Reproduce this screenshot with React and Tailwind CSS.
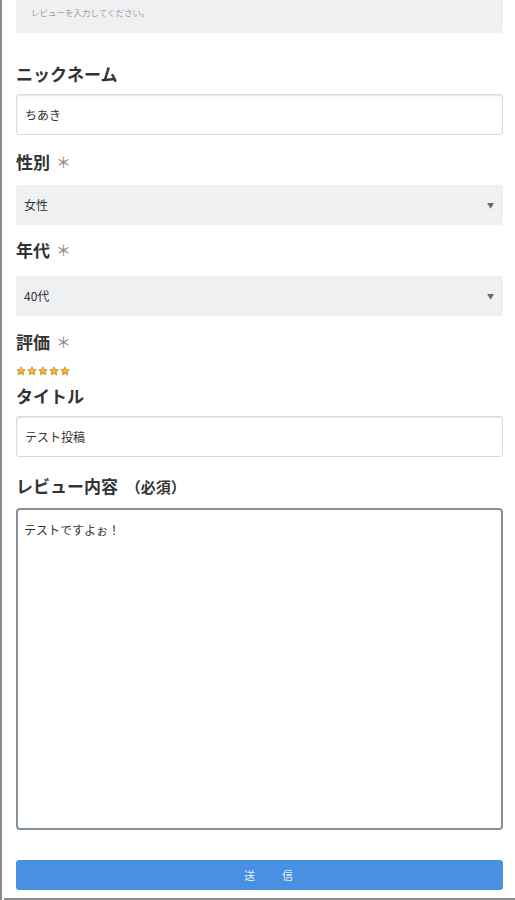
import React from 'react';

const font = { fontFamily: '"Noto Sans CJK JP", "Noto Sans", sans-serif' };

const Star = () => (
  <svg width="10" height="10" viewBox="0 0 24 24">
    <defs>
      <linearGradient id="sg" x1="0" y1="0" x2="0" y2="1">
        <stop offset="0" stopColor="#ffd65a" />
        <stop offset="1" stopColor="#f0a000" />
      </linearGradient>
    </defs>
    <path
      d="M12 1.8l3.1 6.6 7.1.8-5.3 4.9 1.5 7.1L12 17.6l-6.4 3.6 1.5-7.1-5.3-4.9 7.1-.8z"
      fill="url(#sg)"
      stroke="#b8741a"
      strokeWidth="1.6"
      strokeLinejoin="round"
    />
  </svg>
);

const Label = ({ children, required, className }) => (
  <div className={`flex items-center h-6 leading-6 text-[17px] font-bold text-[#333] ${className}`}>
    <span>{children}</span>
    {required && <span className="ml-[6px] text-[15px] font-normal text-[#888]">＊</span>}
  </div>
);

const TextBox = ({ value, className }) => (
  <div
    className={`h-[41px] flex items-center px-2 bg-white border border-[#d6dadf] rounded-[3px] shadow-[inset_0_1px_2px_rgba(0,0,0,0.1)] text-[12px] text-[#333] ${className}`}
  >
    {value}
  </div>
);

const SelectBox = ({ value, className }) => (
  <div className={`h-10 flex items-center justify-between pl-2 pr-[9px] bg-[#eff0f2] rounded-[3px] text-[12px] text-[#333] ${className}`}>
    <span>{value}</span>
    <span className="text-[7px] text-[#666]">▼</span>
  </div>
);

export default function App() {
  return (
    <div style={font} className="w-[515px] h-[900px] bg-white border-l-2 border-[#8a8a8a] flex flex-col overflow-hidden">
      <div className="pl-[14px] pr-[12px] flex flex-col">
        <div className="h-[33px] bg-[#eff0f2] rounded-b-[3px] pl-[15px] pt-[6px] text-[8.5px] leading-3 text-[#9aa0a6]">
          レビューを入力してください。
        </div>

        <Label className="mt-[29px]">ニックネーム</Label>
        <TextBox value="ちあき" className="mt-2" />

        <Label required className="mt-[15px]">性別</Label>
        <SelectBox value="女性" className="mt-[11px]" />

        <Label required className="mt-[13px]">年代</Label>
        <SelectBox value="40代" className="mt-[14px]" />

        <Label required className="mt-[14px]">評価</Label>
        <div className="mt-3 h-[10px] flex gap-px">
          <Star />
          <Star />
          <Star />
          <Star />
          <Star />
        </div>

        <Label className="mt-2">タイトル</Label>
        <TextBox value="テスト投稿" className="mt-2" />

        <Label className="mt-[17px]">
          レビュー内容 <span className="ml-1 text-[15px]">（必須）</span>
        </Label>
        <div className="mt-[10px] h-[322px] bg-white border-2 border-[#84919d] rounded-[4px] px-[6px] pt-[10px] text-[12px] leading-5 text-[#333]">
          テストですよぉ！
        </div>

        <div className="mt-[30px] h-[30px] bg-[#4a90e2] rounded-[3px] flex items-center justify-center gap-[27px] pl-[18px] text-[11px] text-[#e3edfa]">
          <span>送</span>
          <span>信</span>
        </div>
      </div>
      <div className="mt-2 ml-[2px] h-[3px] bg-[#8a8a8a]" />
    </div>
  );
}
